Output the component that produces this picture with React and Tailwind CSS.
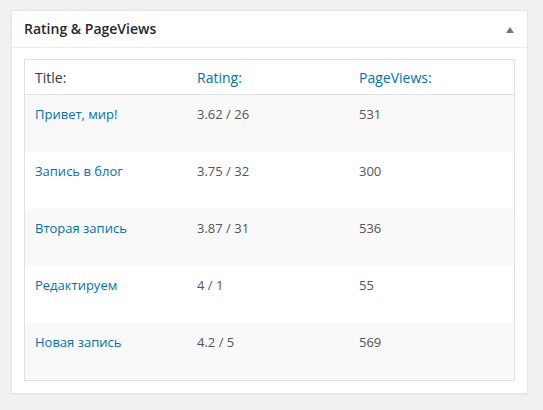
import React from 'react';

const rows = [
  { title: 'Привет, мир!', rating: '3.62 / 26', views: '531' },
  { title: 'Запись в блог', rating: '3.75 / 32', views: '300' },
  { title: 'Вторая запись', rating: '3.87 / 31', views: '536' },
  { title: 'Редактируем', rating: '4 / 1', views: '55' },
  { title: 'Новая запись', rating: '4.2 / 5', views: '569' },
];

const App = () => {
  return (
    <div className="min-h-[410px] bg-[#f1f1f1] pt-[10px] pl-[11px] pb-4" style={{ fontFamily: '"Open Sans", "Noto Sans", sans-serif' }}>
      <div className="w-[517px] bg-white border border-[#e5e5e5] shadow-[0_1px_1px_rgba(0,0,0,0.04)]">
        {/* header */}
        <div className="h-[37px] flex items-center justify-between pl-3 pr-[13px] border-b border-[#eeeeee]">
          <h2 className="text-[14px] font-semibold text-[#23282d] leading-none">Rating &amp; PageViews</h2>
          <svg width="8" height="6" viewBox="0 0 8 6" className="mt-[1px]">
            <path d="M4 0 L8 6 L0 6 Z" fill="#72777c" />
          </svg>
        </div>

        <div className="px-3 pt-[11px] pb-3">
          <div className="border border-[#e1e1e1]">
            <div className="grid grid-cols-[162px_162px_1fr] h-[35px] items-center border-b border-[#e1e1e1] text-[14px]">
              <div className="pl-[10px] text-[#32373c]">Title:</div>
              <div className="pl-[10px] text-[#0073aa]">Rating:</div>
              <div className="pl-[10px] text-[#0073aa]">PageViews:</div>
            </div>
            {rows.map((r, i) => (
              <div
                key={r.title}
                className={`grid grid-cols-[162px_162px_1fr] h-[57px] pt-[10px] text-[13px] leading-[19px] ${i % 2 === 0 ? 'bg-[#f9f9f9]' : 'bg-white'}`}
              >
                <div className="pl-[10px] text-[#0073aa]">{r.title}</div>
                <div className="pl-[10px] text-[#555555]">{r.rating}</div>
                <div className="pl-[10px] text-[#555555]">{r.views}</div>
              </div>
            ))}
          </div>
        </div>
      </div>
    </div>
  );
};

export default App;
